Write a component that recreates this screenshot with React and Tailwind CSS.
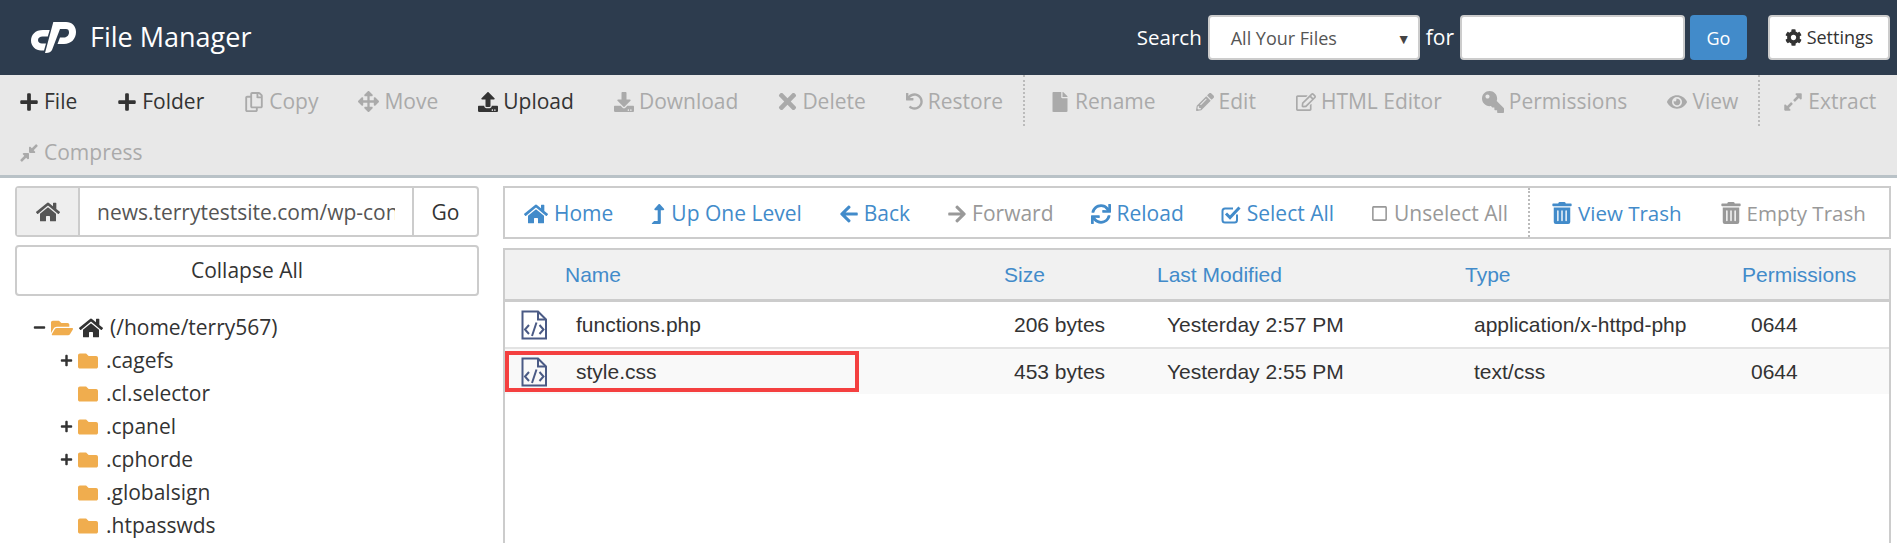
import React from "react";
import {
  FaPlus, FaRegCopy, FaArrowsAlt, FaUpload, FaDownload, FaTimes, FaUndo, FaFile, FaPencilAlt,
  FaRegEdit, FaKey, FaEye, FaExpandAlt, FaCompressAlt, FaHome, FaLevelUpAlt, FaArrowLeft, FaArrowRight,
  FaSync, FaRegSquare, FaTrashAlt, FaCog, FaFolder, FaFolderOpen, FaMinus,
} from "react-icons/fa";

const OPEN = "font-['Open_Sans',sans-serif]";

function Logo() {
  return (
    <svg width="45" height="31" viewBox="0 0 45 31" fill="white">
      <path d="M18.7 8 L12 8 C4 8 0 13 0 18.5 C0 24.5 5 28.5 10 28.5 L13 28.5 L15 21.5 L11 21.5 C8.5 21.5 7 20 7 18 C7 16 9 14.5 11.5 14.5 L16.8 14.5 Z" />
      <path d="M22.3 0 L35 0 C41 0 45 4 45 10 C45 17 40 22 33 22 L26.5 22 L29 15.5 L33 15.5 C36 15.5 38 13 38 10.5 C38 8 37 7 35 7 L29 7 L21 28 C20 30 18 31 15 31 L14 31 Z" />
    </svg>
  );
}

function CodeFile() {
  return (
    <svg width="26" height="30" viewBox="0 0 26 30" fill="none" stroke="#4a5a85" strokeWidth="2">
      <path d="M1.5 1.5 H17 L25 9.5 V28.5 H1.5 Z" />
      <path d="M17 1.5 V9.5 H25" />
      <path d="M8 15 L4 19.5 L8 24 M18.5 15 L22.5 19.5 L18.5 24 M15.5 12.5 L11 26" />
    </svg>
  );
}

function CheckBoxIcon({ size = 20 }) {
  return (
    <svg width={size} height={size} viewBox="0 0 20 20" fill="none" stroke="currentColor">
      <path d="M16 10.5 V16 C16 17.5 15 18.5 13.5 18.5 H4 C2.5 18.5 1.5 17.5 1.5 16 V7 C1.5 5.5 2.5 4.5 4 4.5 H12" strokeWidth="2" />
      <path d="M5 9.5 L9 13.5 L18.5 3.5" strokeWidth="3" />
    </svg>
  );
}

function ToolItem({ icon: Icon, label, on, size = 20, iconClass = "" }) {
  return (
    <div className={`flex items-center h-[51px] pt-[2px] px-[20px] gap-[5px] whitespace-nowrap ${on ? "text-[#333]" : "text-[#aaa]"}`}>
      <Icon size={size} className={iconClass} />
      <span>{label}</span>
    </div>
  );
}

function Sep({ wide }) {
  return <div className={`h-[51px] w-0 border-l-2 border-dotted border-[#bbb] ${wide ? "mr-[5px]" : "mr-[3px]"}`} />;
}

function NavItem({ icon: Icon, label, on = true, size = 20, gap = "gap-[6px]", iconClass = "" }) {
  return (
    <div className={`flex items-center ${gap} whitespace-nowrap ${on ? "text-[#428bca]" : "text-[#999]"}`}>
      <Icon size={size} className={iconClass} />
      <span>{label}</span>
    </div>
  );
}

function TreeRow({ name, plus }) {
  return (
    <div className="flex items-center h-[33px] pl-[45px]">
      <span className="w-[18px] flex">{plus && <FaPlus size={13} className="text-[#333]" />}</span>
      <FaFolder size={20} className="text-[#f0ad4e]" />
      <span className="ml-[8px]">{name}</span>
    </div>
  );
}

const GRID = "grid grid-cols-[499px_153px_308px_277px_1fr]";

function FileRow({ name, size, date, type, shaded }) {
  return (
    <div className={`${GRID} items-center text-[#333] ${shaded ? "h-[45px] bg-[#f9f9f9]" : "h-[47px] border-b-2 border-[#e3e3e3]"}`}>
      <div className="flex items-center pl-[16px]">
        <CodeFile />
        <span className="ml-[29px]">{name}</span>
      </div>
      <div className="pl-[10px]">{size}</div>
      <div className="pl-[10px]">{date}</div>
      <div className="pl-[9px]">{type}</div>
      <div className="pl-[9px]">0644</div>
    </div>
  );
}

export default function App() {
  return (
    <div className={`h-[543px] w-[1897px] overflow-hidden bg-white text-[21px] ${OPEN}`}>
      {/* top bar */}
      <div className="h-[75px] bg-[#2d3c4e] flex items-center pl-[31px] pr-[7px] text-white">
        <Logo />
        <span className="ml-[14px] text-[27px]">File Manager</span>
        <div className="ml-auto flex items-center">
          <span className="text-[20.5px]">Search</span>
          <div className="ml-[6px] w-[212px] h-[45px] pt-[2px] rounded bg-white border-2 border-[#ccc] flex items-center justify-between pl-[21px] pr-[7px] text-[18px] text-[#555]">
            <span>All Your Files</span>
            <span className="text-[14px] text-[#444]">▼</span>
          </div>
          <span className="ml-[6px]">for</span>
          <input className="ml-[6px] w-[225px] h-[45px] rounded bg-white border-2 border-[#ccc]" />
          <div className="ml-[5px] w-[57px] h-[45px] pt-[2px] rounded-sm bg-[#428bca] flex items-center justify-center text-[18px]">Go</div>
          <div className="ml-[21px] w-[122px] h-[45px] rounded-sm bg-white border-2 border-[#ccc] flex items-center justify-center gap-[5px] text-[18px] text-[#333]">
            <FaCog size={17} />
            <span>Settings</span>
          </div>
        </div>
      </div>

      {/* action toolbar */}
      <div className="h-[103px] bg-[#e8e8e8] border-b-[3px] border-[#b9c2c7] flex flex-wrap content-start -ml-[1px]">
        <ToolItem icon={FaPlus} label="File" on />
        <ToolItem icon={FaPlus} label="Folder" on />
        <ToolItem icon={FaRegCopy} label="Copy" />
        <ToolItem icon={FaArrowsAlt} label="Move" size={21} />
        <ToolItem icon={FaUpload} label="Upload" on />
        <ToolItem icon={FaDownload} label="Download" />
        <ToolItem icon={FaTimes} label="Delete" size={25} iconClass="-mx-[3px]" />
        <ToolItem icon={FaUndo} label="Restore" size={17} />
        <Sep wide />
        <ToolItem icon={FaFile} label="Rename" size={20} />
        <ToolItem icon={FaPencilAlt} label="Edit" size={18} />
        <ToolItem icon={FaRegEdit} label="HTML Editor" />
        <ToolItem icon={FaKey} label="Permissions" size={22} iconClass="-scale-x-100" />
        <ToolItem icon={FaEye} label="View" />
        <Sep />
        <ToolItem icon={FaExpandAlt} label="Extract" />
        <ToolItem icon={FaCompressAlt} label="Compress" />
      </div>

      <div className="flex pt-[8px]">
        {/* left panel */}
        <div className="w-[503px] shrink-0 pl-[15px] pr-[24px] text-[#333]">
          <div className="flex h-[51px] border-2 border-[#ccc] rounded">
            <div className="w-[63px] bg-[#eee] flex items-center justify-center border-r-2 border-[#ccc] text-[#555]">
              <FaHome size={24} />
            </div>
            <input readOnly value="news.terrytestsite.com/wp-content/themes" className="flex-1 min-w-0 px-[17px] pt-[2px] text-[#555] outline-none" />
            <div className="w-[65px] pt-[2px] border-l-2 border-[#ccc] flex items-center justify-center">Go</div>
          </div>
          <div className="mt-[8px] h-[51px] border-2 border-[#ccc] rounded-sm flex items-center justify-center">Collapse All</div>
          <div className="mt-[15px]">
            <div className="flex items-center h-[33px] pl-[18px]">
              <FaMinus size={13} className="text-[#333]" />
              <FaFolderOpen size={22} className="ml-[5px] text-[#f0ad4e]" />
              <FaHome size={24} className="ml-[6px] text-[#333]" />
              <span className="ml-[7px]">(/home/terry567)</span>
            </div>
            <TreeRow name=".cagefs" plus />
            <TreeRow name=".cl.selector" />
            <TreeRow name=".cpanel" plus />
            <TreeRow name=".cphorde" plus />
            <TreeRow name=".globalsign" />
            <TreeRow name=".htpasswds" />
          </div>
        </div>

        {/* right panel */}
        <div className="w-[1388px] shrink-0">
          <div className="h-[53px] border-2 border-[#ccc] flex items-stretch pl-[19px]">
            <div className="flex items-center gap-[37px] pt-[2px]">
              <NavItem icon={FaHome} label="Home" size={24} />
              <NavItem icon={FaLevelUpAlt} label="Up One Level" size={20} iconClass="-mx-[2px]" gap="gap-[5px]" />
              <NavItem icon={FaArrowLeft} label="Back" gap="gap-[5px]" />
              <NavItem icon={FaArrowRight} label="Forward" on={false} gap="gap-[5px]" />
              <NavItem icon={FaSync} label="Reload" />
              <NavItem icon={CheckBoxIcon} label="Select All" />
              <NavItem icon={FaRegSquare} label="Unselect All" on={false} size={17} />
            </div>
            <div className="ml-[20px] border-l-2 border-dotted border-[#bbb]" />
            <div className="ml-[21px] flex items-center gap-[38px] text-[20.5px] pt-[1px]">
              <NavItem icon={FaTrashAlt} label="View Trash" size={22} gap="gap-[5px]" />
              <NavItem icon={FaTrashAlt} label="Empty Trash" on={false} size={22} gap="gap-[5px]" />
            </div>
          </div>
          <div className="relative mt-[9px] h-[300px] border-2 border-[#ccc] border-b-0 font-['Liberation_Sans',sans-serif]">
            <div className={`${GRID} items-center h-[52px] bg-[#f1f1f1] border-b-[3px] border-[#ccc] text-[#428bca]`}>
              <div className="pl-[60px]">Name</div>
              <div>Size</div>
              <div>Last Modified</div>
              <div>Type</div>
              <div>Permissions</div>
            </div>
            <FileRow name="functions.php" size="206 bytes" date="Yesterday 2:57 PM" type="application/x-httpd-php" />
            <FileRow name="style.css" size="453 bytes" date="Yesterday 2:55 PM" type="text/css" shaded />
            {/* annotation around the selected file */}
            <div className="absolute left-[0px] top-[101px] w-[354px] h-[41px] border-4 border-[#f44040]" />
          </div>
        </div>
      </div>
    </div>
  );
}
